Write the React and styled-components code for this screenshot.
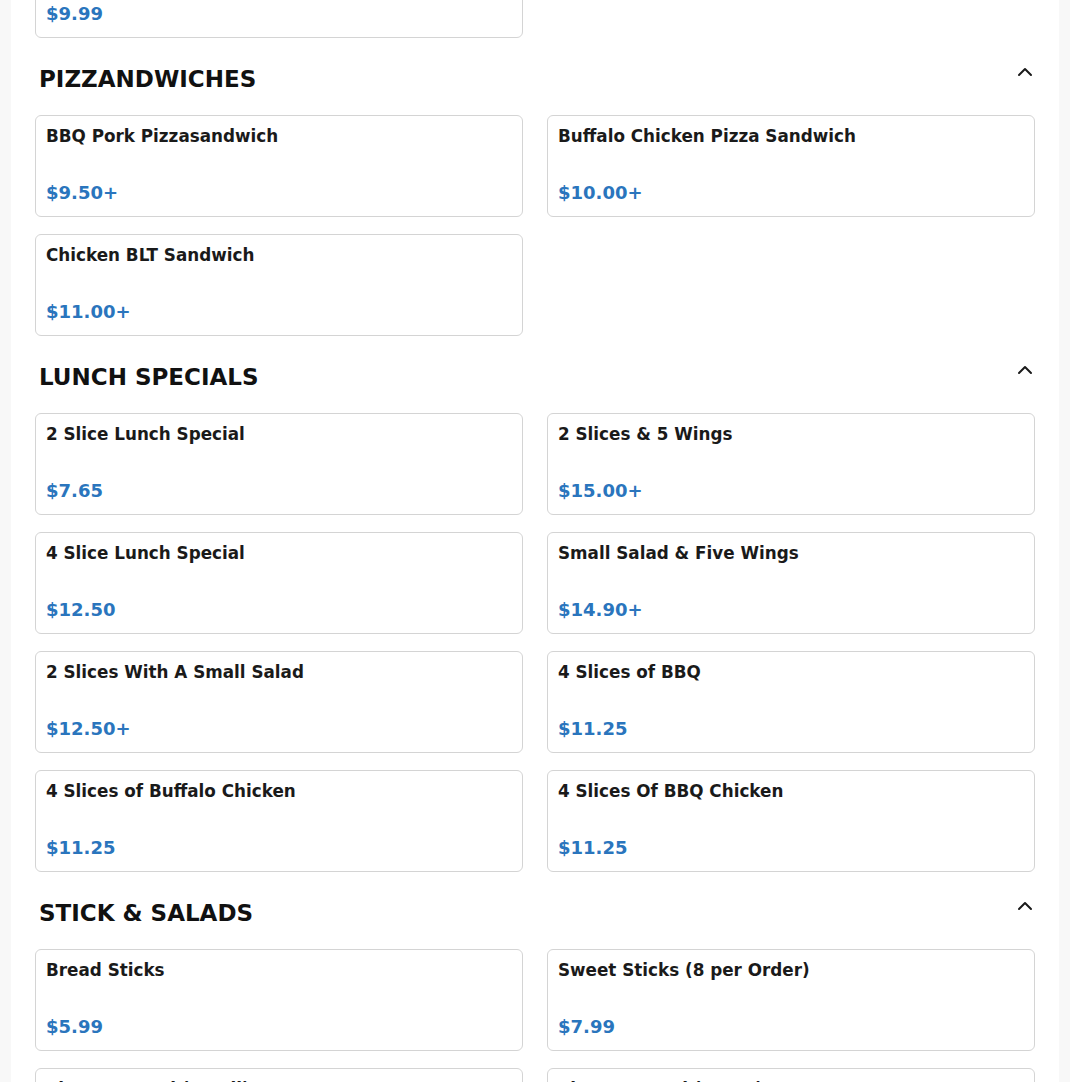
import React from "react";
import styled, { createGlobalStyle } from "styled-components";
import { ChevronUp } from "lucide-react";

const GlobalStyle = createGlobalStyle`
  html, body {
    margin: 0;
    padding: 0;
    background: #f8f8f8;
  }
  body {
    font-family: "DejaVu Sans", "Liberation Sans", sans-serif;
    color: #1c1c1c;
    overflow: hidden;
  }
`;

const Page = styled.div`
  width: 1048px;
  margin: -64px auto 0;
  background: #fff;
  padding: 0 24px 40px;
  box-sizing: border-box;
`;

const Section = styled.section`
  padding-top: ${(props) => (props.first ? "0" : "21px")};
`;

const SectionHeader = styled.div`
  display: flex;
  justify-content: space-between;
  align-items: flex-start;
  padding-left: 4px;
  margin: 0 -2px 23px 0;
`;

const SectionTitle = styled.h2`
  margin: 7px 0 0;
  font-size: 23px;
  font-weight: 700;
  line-height: normal;
  color: #111;
`;

const Toggle = styled.span`
  display: flex;
  width: 24px;
  height: 24px;
  margin-top: 1px;
  color: #1a1a1a;
`;

const Grid = styled.div`
  display: grid;
  grid-template-columns: 1fr 1fr;
  column-gap: 24px;
  row-gap: 17px;
`;

const Card = styled.div`
  display: flex;
  flex-direction: column;
  border: 1px solid #d4d4d4;
  border-radius: 6px;
  padding: 10px 10px 13px;
  height: 102px;
  box-sizing: border-box;
  background: #fff;
`;

const ItemName = styled.div`
  font-size: 16.8px;
  font-weight: 700;
  line-height: normal;
  color: #1a1a1a;
`;

const ItemPrice = styled.div`
  margin-top: auto;
  font-size: 18px;
  font-weight: 700;
  line-height: normal;
  color: #2a75bd;
`;

const menu = [
  {
    title: null,
    items: [{ name: "Garlic Knots", price: "$9.99" }],
  },
  {
    title: "PIZZANDWICHES",
    items: [
      { name: "BBQ Pork Pizzasandwich", price: "$9.50+" },
      { name: "Buffalo Chicken Pizza Sandwich", price: "$10.00+" },
      { name: "Chicken BLT Sandwich", price: "$11.00+" },
    ],
  },
  {
    title: "LUNCH SPECIALS",
    items: [
      { name: "2 Slice Lunch Special", price: "$7.65" },
      { name: "2 Slices & 5 Wings", price: "$15.00+" },
      { name: "4 Slice Lunch Special", price: "$12.50" },
      { name: "Small Salad & Five Wings", price: "$14.90+" },
      { name: "2 Slices With A Small Salad", price: "$12.50+" },
      { name: "4 Slices of BBQ", price: "$11.25" },
      { name: "4 Slices of Buffalo Chicken", price: "$11.25" },
      { name: "4 Slices Of BBQ Chicken", price: "$11.25" },
    ],
  },
  {
    title: "STICK & SALADS",
    items: [
      { name: "Bread Sticks", price: "$5.99" },
      { name: "Sweet Sticks (8 per Order)", price: "$7.99" },
      { name: "Cheese Bread (Small)", price: "$8.99" },
      { name: "Cheese Bread (Large)", price: "$12.99" },
    ],
  },
];

const App = () => {
  return (
    <>
      <GlobalStyle />
      <Page>
        {menu.map((section, i) => (
          <Section key={i} first={i === 0}>
            {section.title && (
              <SectionHeader>
                <SectionTitle>{section.title}</SectionTitle>
                <Toggle>
                  <ChevronUp size={24} strokeWidth={2} />
                </Toggle>
              </SectionHeader>
            )}
            <Grid>
              {section.items.map((item) => (
                <Card key={item.name}>
                  <ItemName>{item.name}</ItemName>
                  <ItemPrice>{item.price}</ItemPrice>
                </Card>
              ))}
            </Grid>
          </Section>
        ))}
      </Page>
    </>
  );
};

export default App;
